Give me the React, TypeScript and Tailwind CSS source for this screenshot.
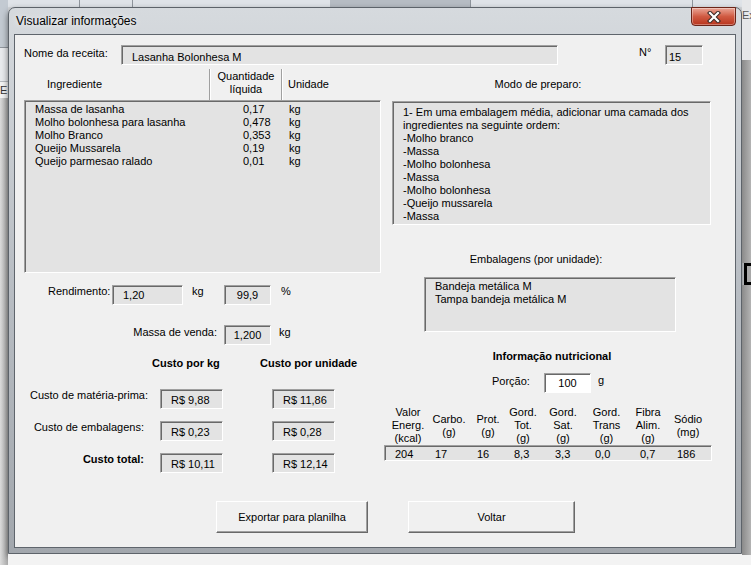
import React from 'react';

const sunken =
    'border border-t-[#a0a0a0] border-l-[#a0a0a0] border-r-white border-b-white shadow-[inset_1px_1px_0_#696969]';

function Field({ className = '', children }: { className?: string; children?: React.ReactNode }) {
    return <div className={`${sunken} bg-[#e3e3e3] leading-[13px] whitespace-nowrap ${className}`}>{children}</div>;
}

function Btn({ label, className = '' }: { label: string; className?: string }) {
    return (
        <div
            className={`flex items-center justify-center h-[32px] bg-[#f0f0f0] border border-t-white border-l-white border-r-[#696969] border-b-[#696969] shadow-[inset_-1px_-1px_0_#a0a0a0] ${className}`}
        >
            {label}
        </div>
    );
}

const Sep = () => <div className="w-[2px] h-full border-l border-r border-l-[#a0a0a0] border-r-white" />;

const ingredientes = [
    ['Massa de lasanha', '0,17', 'kg'],
    ['Molho bolonhesa para lasanha', '0,478', 'kg'],
    ['Molho Branco', '0,353', 'kg'],
    ['Queijo Mussarela', '0,19', 'kg'],
    ['Queijo parmesao ralado', '0,01', 'kg'],
];

const preparo = [
    '1- Em uma embalagem média, adicionar uma camada dos',
    'ingredientes na seguinte ordem:',
    '-Molho branco',
    '-Massa',
    '-Molho bolonhesa',
    '-Massa',
    '-Molho bolonhesa',
    '-Queijo mussarela',
    '-Massa',
];

// cabeçalho nutricional: [linhas, largura]
const nutriHead: [string[], string][] = [
    [['Valor', 'Energ.', '(kcal)'], 'w-[48px]'],
    [['Carbo.', '(g)'], 'w-[34px]'],
    [['Prot.', '(g)'], 'w-[44px]'],
    [['Gord.', 'Tot.', '(g)'], 'w-[26px]'],
    [['Gord.', 'Sat.', '(g)'], 'w-[54px]'],
    [['Gord.', 'Trans', '(g)'], 'w-[33px]'],
    [['Fibra', 'Alim.', '(g)'], 'w-[50px]'],
    [['Sódio', '(mg)'], 'w-[30px]'],
];

const nutriVal: [string, string][] = [
    ['204', 'w-[40px]'],
    ['17', 'w-[42px]'],
    ['16', 'w-[37px]'],
    ['8,3', 'w-[41px]'],
    ['3,3', 'w-[40px]'],
    ['0,0', 'w-[45px]'],
    ['0,7', 'w-[37px]'],
    ['186', ''],
];

function CloseX() {
    return (
        <svg width="14" height="12" viewBox="0 0 14 12">
            <path d="M3 2 L11 10 M11 2 L3 10" stroke="#3b2a26" strokeWidth="4.2" strokeLinecap="square" />
            <path d="M3 2 L11 10 M11 2 L3 10" stroke="#ffffff" strokeWidth="2.2" strokeLinecap="square" />
        </svg>
    );
}

const VisualizarInfo = () => {
    return (
        <div className="w-[720px] h-[512px] bg-[#f0f0f0] text-[11px] leading-[13px] text-black">
            {/* nome da receita */}
            <div className="flex pt-[10px] h-[30px]">
                <span className="ml-[9px] mt-[2px] w-[97px]">Nome da receita:</span>
                <Field className="w-[437px] h-[20px] pl-[10px] pt-[5px]">Lasanha Bolonhesa M</Field>
                <span className="ml-[81px] mt-[1px] w-[26px]">N°</span>
                <Field className="w-[38px] h-[20px] pl-[3px] pt-[5px]">15</Field>
            </div>

            <div className="flex mt-[4px]">
                {/* coluna esquerda */}
                <div className="ml-[9px] w-[357px] flex flex-col">
                    <div className="flex h-[31px]">
                        <div className="w-[185px] pl-[23px] pt-[9px]">Ingrediente</div>
                        <Sep />
                        <div className="w-[70px] flex flex-col items-center pt-[1px]">
                            <span>Quantidade</span>
                            <span>líquida</span>
                        </div>
                        <Sep />
                        <div className="pl-[5px] pt-[9px]">Unidade</div>
                    </div>
                    <Field className="h-[173px] pl-[10px] pt-[2px]">
                        {ingredientes.map((r) => (
                            <div key={r[0]} className="flex">
                                <span className="w-[208px]">{r[0]}</span>
                                <span className="w-[46px]">{r[1]}</span>
                                <span>{r[2]}</span>
                            </div>
                        ))}
                    </Field>

                    <div className="flex mt-[12px] h-[20px]">
                        <span className="ml-[24px] w-[64px]">Rendimento:</span>
                        <Field className="w-[71px] h-[20px] pl-[10px] pt-[3px]">1,20</Field>
                        <span className="ml-[9px] w-[32px]">kg</span>
                        <Field className="w-[47px] h-[20px] text-center pt-[3px]">99,9</Field>
                        <span className="ml-[10px]">%</span>
                    </div>

                    <div className="flex mt-[20px] h-[20px]">
                        <span className="w-[200px] text-right pr-[7px] mt-[1px]">Massa de venda:</span>
                        <Field className="w-[47px] h-[20px] text-center pt-[3px]">1,200</Field>
                        <span className="ml-[8px] mt-[1px]">kg</span>
                    </div>

                    <div className="flex mt-[12px] font-bold">
                        <span className="ml-[128px] w-[108px]">Custo por kg</span>
                        <span>Custo por unidade</span>
                    </div>

                    <div className="flex mt-[19px] h-[20px]">
                        <span className="w-[124px] text-right">Custo de matéria-prima:</span>
                        <Field className="ml-[12px] w-[63px] h-[20px] pl-[10px] pt-[4px]">R$ 9,88</Field>
                        <Field className="ml-[49px] w-[63px] h-[20px] pl-[10px] pt-[4px]">R$ 11,86</Field>
                    </div>
                    <div className="flex mt-[12px] h-[20px]">
                        <span className="w-[120px] text-right">Custo de embalagens:</span>
                        <Field className="ml-[16px] w-[63px] h-[20px] pl-[10px] pt-[4px]">R$ 0,23</Field>
                        <Field className="ml-[49px] w-[63px] h-[20px] pl-[10px] pt-[4px]">R$ 0,28</Field>
                    </div>
                    <div className="flex mt-[12px] h-[20px]">
                        <span className="w-[120px] text-right font-bold">Custo total:</span>
                        <Field className="ml-[16px] w-[63px] h-[20px] pl-[10px] pt-[4px]">R$ 10,11</Field>
                        <Field className="ml-[49px] w-[63px] h-[20px] pl-[10px] pt-[4px]">R$ 12,14</Field>
                    </div>

                    <Btn label="Exportar para planilha" className="mt-[28px] ml-[192px] w-[152px]" />
                </div>

                {/* coluna direita */}
                <div className="ml-[3px] w-[328px] flex flex-col">
                    <div className="mt-[9px] w-[308px] text-center">Modo de preparo:</div>
                    <Field className="mt-[10px] ml-[8px] w-[319px] h-[124px] pl-[10px] pt-[4px]">
                        {preparo.map((l, i) => (
                            <div key={i}>{l}</div>
                        ))}
                    </Field>

                    <div className="mt-[28px] w-[304px] text-center">Embalagens (por unidade):</div>
                    <Field className="mt-[11px] ml-[40px] w-[252px] h-[55px] pl-[10px] pt-[2px]">
                        <div>Bandeja metálica M</div>
                        <div>Tampa bandeja metálica M</div>
                    </Field>

                    <div className="mt-[18px] w-[336px] text-center font-bold">Informação nutricional</div>
                    <div className="flex mt-[10px] h-[20px]">
                        <span className="ml-[108px] w-[52px] mt-[2px]">Porção:</span>
                        <div className={`${sunken} bg-white w-[47px] h-[20px] text-center pt-[3px]`}>100</div>
                        <span className="ml-[7px] mt-[1px]">g</span>
                    </div>

                    <div className="flex mt-[13px] h-[39px]">
                        {nutriHead.map(([lines, w], i) => (
                            <div key={i} className={`${w} h-full flex flex-col items-center justify-center text-center`}>
                                {lines.map((l) => (
                                    <span key={l} className="whitespace-nowrap">
                                        {l}
                                    </span>
                                ))}
                            </div>
                        ))}
                    </div>
                    <Field className="h-[16px] pl-[10px] pt-[2px] flex">
                        {nutriVal.map(([v, w], i) => (
                            <span key={i} className={w}>
                                {v}
                            </span>
                        ))}
                    </Field>

                    <Btn label="Voltar" className="mt-[40px] ml-[24px] w-[167px]" />
                </div>
            </div>
        </div>
    );
};

export default function App() {
    return (
        <div className="w-[751px] h-[565px] overflow-hidden flex bg-[#d3d6da] font-['Liberation_Sans',Arial,sans-serif]">
            {/* fundo à esquerda (planilha) */}
            <div className="w-[8px] h-full flex flex-col">
                <div className="h-[48px] bg-[#c3cad2] border-b border-[#8f959c]" />
                <div className="h-[34px] bg-[#e9ebee] border-b border-[#b8bcc1]" />
                <div className="h-[16px] bg-[#f4f4f4] text-[11px] leading-[16px] text-[#333] overflow-hidden">E</div>
                <div className="flex-1 bg-linear-to-r from-[#dcdcdc] to-[#a9a9a9]" />
            </div>

            <div className="w-[734px] flex flex-col">
                {/* faixa superior */}
                <div className="h-[7px] flex bg-[#dfe3e8]">
                    <div className="w-[71px]" />
                    <div className="w-px bg-[#8f959c]" />
                    <div className="w-[52px]" />
                    <div className="w-px bg-[#8f959c]" />
                    <div className="w-[197px]" />
                    <div className="w-[140px] bg-[#b6bcc3]" />
                    <div className="w-px bg-[#8f959c]" />
                    <div className="w-[221px]" />
                    <div className="w-px bg-[#8f959c]" />
                </div>

                {/* janela */}
                <div className="w-[734px] h-[547px] rounded-t-[7px] border border-[#5d636a] bg-linear-to-b from-[#d6dade] via-[#b9bec4] to-[#a2a7ad] shadow-[0_3px_6px_rgba(0,0,0,0.55)] flex flex-col">
                    <div className="h-[26px] flex items-start justify-between pl-[7px] pr-[5px]">
                        <span className="mt-[6px] text-[12px] leading-[14px] text-black [text-shadow:0_0_6px_#ffffff]">
                            Visualizar informações
                        </span>
                        <div className="-mt-px w-[45px] h-[19px] rounded-b-[4px] border border-[#6b2418] bg-linear-to-b from-[#e9a596] via-[#d05a42] to-[#b8341c] shadow-[inset_0_0_0_1px_rgba(255,255,255,0.35)] flex items-center justify-center">
                            <CloseX />
                        </div>
                    </div>
                    <div className="mx-[5px] border border-[#5f656c]">
                        <VisualizarInfo />
                    </div>
                </div>

                <div className="flex-1 bg-[#f3f3f3]" />
            </div>

            {/* fundo à direita */}
            <div className="w-[9px] h-full flex flex-col">
                <div className="h-[60px] bg-[#e6e7e9] text-[11px] leading-[13px] text-[#555] pt-[9px] overflow-hidden">Ex</div>
                <div className="h-[203px] bg-linear-to-r from-[#8a8a8a] to-[#b4b4b4]" />
                <div className="h-[22px] ml-[2px] border-[3px] border-r-0 border-black bg-[#a8a8a8]" />
                <div className="flex-1 bg-linear-to-r from-[#8a8a8a] to-[#b4b4b4]" />
                <div className="h-[10px] bg-[#f3f3f3]" />
            </div>
        </div>
    );
}
